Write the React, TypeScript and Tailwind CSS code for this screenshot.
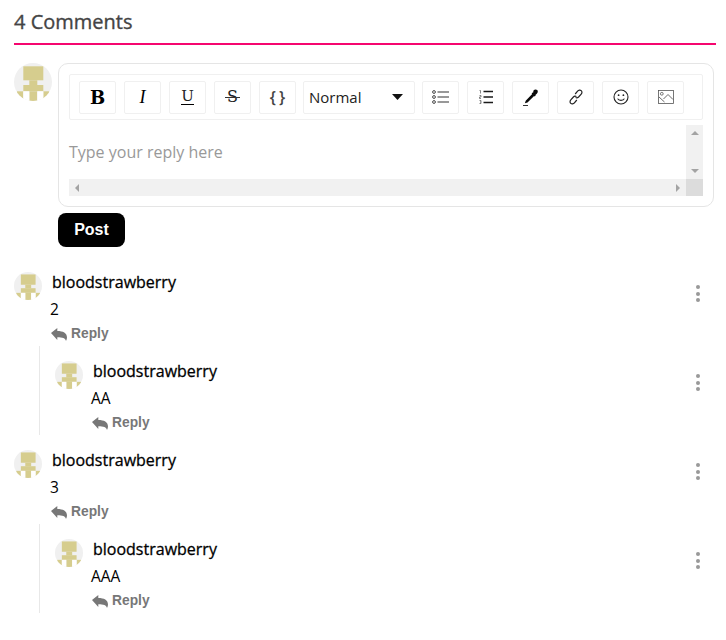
import type { ReactNode } from "react";

function Avatar({ size }: { size: number }) {
  return (
    <svg width={size} height={size} viewBox="0 0 38 38" className="shrink-0 rounded-full">
      <rect width="38" height="38" fill="#f0f0f0" />
      <g fill="#d6cd8e">
        <rect x="9.3" y="3.3" width="20" height="14" />
        <rect x="15.3" y="17.3" width="8" height="5" />
        <rect x="9.3" y="22" width="20" height="6.3" />
        <rect x="3" y="28.3" width="6.3" height="9.7" />
        <rect x="15.3" y="28.3" width="8" height="9.7" />
        <rect x="29.3" y="28.3" width="6" height="9.7" />
      </g>
      <g fill="#ffffff">
        <rect x="9.3" y="28.3" width="6" height="9.7" />
        <rect x="23.3" y="28.3" width="6" height="9.7" />
      </g>
    </svg>
  );
}

function ToolButton({ children }: { children: ReactNode }) {
  return (
    <div className="relative flex h-[33px] w-[37px] shrink-0 items-center justify-center rounded-[2px] border border-[#f0f0f0] bg-white">
      {children}
    </div>
  );
}

function Dots() {
  return (
    <div className="mt-[13px] flex flex-col gap-[2.7px]">
      <div className="h-[4px] w-[4px] rounded-full bg-[#999]" />
      <div className="h-[4px] w-[4px] rounded-full bg-[#999]" />
      <div className="h-[4px] w-[4px] rounded-full bg-[#999]" />
    </div>
  );
}

function ReplyIcon() {
  return (
    <svg width="16" height="13" viewBox="0 0 16 13">
      <path d="M0 5 6.300 0v3C12 3 16 5 16 9.500c0 1.300-.4 2.500-1 3.500-.6-2.800-3.500-3.800-8.700-3.800V12z" fill="#777" />
    </svg>
  );
}

function Comment({ text }: { text: string }) {
  return (
    <div>
      <div className="flex h-7 items-start justify-between pr-[16px]">
        <div className="flex items-start gap-[10px]">
          <Avatar size={28} />
          <span className="text-[16px] font-medium leading-[20px] text-black [-webkit-text-stroke:0.3px_#000]">bloodstrawberry</span>
        </div>
        <Dots />
      </div>
      <div className="-mt-px ml-9 text-[15.5px] leading-[20px] text-black">{text}</div>
      <div
        className="mt-[5px] ml-[37px] flex h-[20px] items-center gap-[4px] text-[13.8px] font-bold text-[#777]"
        style={{ fontFamily: '"Liberation Sans", Arial, sans-serif' }}
      >
        <ReplyIcon />
        <span>Reply</span>
      </div>
    </div>
  );
}

function Thread({ a, b }: { a: string; b: string }) {
  return (
    <div className="pb-[15px]">
      <div className="h-[74px]">
        <Comment text={a} />
      </div>
      <div className="ml-[25px] h-[89px] border-l border-[#e8e8e8] pl-[15px] pt-[15px]">
        <Comment text={b} />
      </div>
    </div>
  );
}

export default function App() {
  return (
    <div className="min-h-[640px] w-[726px] bg-white pl-[14px] pr-[10px]" style={{ fontFamily: '"Open Sans", sans-serif' }}>
      <div className="flex h-[45px] items-center border-b-2 border-[#f5066f] text-[20px] font-medium text-[#444] [-webkit-text-stroke:0.35px_#444]">
        4 Comments
      </div>
      <div className="mt-[18px] flex gap-[6px]">
        <Avatar size={38} />
        <div className="flex w-[656px] flex-col">
          <div className="h-[144px] rounded-[10px] border border-[#e5e5e5] px-[10px] pt-[10px]">
            <div className="flex h-[46px] items-center gap-2 rounded-[2px] border border-[#f0f0f0] pl-[9px]">
              <ToolButton>
                <span className="text-[18px] font-bold text-black" style={{ fontFamily: '"DejaVu Serif", serif' }}>B</span>
              </ToolButton>
              <ToolButton>
                <span className="text-[18px] italic text-black" style={{ fontFamily: '"Liberation Serif", serif' }}>I</span>
              </ToolButton>
              <ToolButton>
                <span className="border-b border-black text-[15px] leading-[15px] text-[#222]" style={{ fontFamily: '"DejaVu Serif", serif' }}>U</span>
              </ToolButton>
              <ToolButton>
                <span className="text-[16px] text-[#222]" style={{ fontFamily: '"DejaVu Serif", serif' }}>S</span>
                <div className="absolute left-[10px] top-[15px] h-px w-[15px] bg-[#333]" />
              </ToolButton>
              <ToolButton>
                <span className="pl-[3px] text-[16px] font-semibold tracking-[3px] text-[#444]">{"{}"}</span>
              </ToolButton>
              <div className="-ml-px flex h-[33px] w-[112px] shrink-0 items-center justify-between rounded-[2px] border border-[#f0f0f0] pl-[5px] pr-[11px] text-[15px] text-[#222]">
                <span>Normal</span>
                <svg width="11" height="6" viewBox="0 0 11 6"><path d="M0 0h11L5.500 6z" fill="#111" /></svg>
              </div>
              <div className="-ml-px">
                <ToolButton>
                  <svg width="17" height="14" viewBox="0 0 17 14" fill="none" stroke="#333">
                    <circle cx="2" cy="2" r="1.4" strokeWidth="0.9" />
                    <circle cx="2" cy="7" r="1.4" strokeWidth="0.9" />
                    <circle cx="2" cy="12" r="1.4" strokeWidth="0.9" />
                    <path d="M5.500 2H17M5.500 7H17M5.500 12H17" strokeWidth="1.2" />
                  </svg>
                </ToolButton>
              </div>
              <ToolButton>
                <svg width="14" height="14" viewBox="0 0 14 14" fill="none">
                  <path d="M0.500 0.500h1v3M0.500 5.500h1.500v1.500h-1.500v1.500H2M0.500 10.500H2v3H0.500M1 12h1" stroke="#555" strokeWidth="0.7" />
                  <path d="M4.500 1.500H14M4.500 7H14M4.500 12.500H14" stroke="#1a1a1a" strokeWidth="1.6" />
                </svg>
              </ToolButton>
              <ToolButton>
                <svg width="16" height="17" viewBox="0 0 16 17">
                  <path d="M10.500 1.500c1-1.200 2.800-1.300 3.700-.4s.8 2.500-.4 3.600l-1.400 1.300.3.5-1 1-.6-.5-6.600 6.500-2.600.7.8-2.500L9.200 5l-.6-.6 1-1 .5.4z" fill="#0a0a0a" />
                  <path d="M0 16.500h5" stroke="#333" strokeWidth="1" />
                </svg>
              </ToolButton>
              <ToolButton>
                <svg width="16" height="16" viewBox="0 0 16 16" fill="none" stroke="#222" strokeWidth="1.2">
                  <path d="M7.200 5 9.600 2.100c1-1.200 2.600-1.400 3.600-.5s1 2.400 0 3.500L10.600 8c-1 1-2.200 1.100-3 .3" />
                  <path d="M8.800 11 6.400 13.900c-1 1.200-2.600 1.400-3.600.5s-1-2.400 0-3.500L5.400 8c1-1 2.200-1.100 3-.3" />
                </svg>
              </ToolButton>
              <ToolButton>
                <svg width="16" height="16" viewBox="0 0 16 16" fill="none" stroke="#222" strokeWidth="1.100">
                  <circle cx="8" cy="8" r="7" />
                  <circle cx="5.600" cy="6.200" r="0.9" fill="#222" stroke="none" />
                  <circle cx="10.400" cy="6.200" r="0.9" fill="#222" stroke="none" />
                  <path d="M4.600 9.600c1 2.400 5.800 2.400 6.800 0" />
                </svg>
              </ToolButton>
              <ToolButton>
                <svg width="16" height="14" viewBox="0 0 16 14" fill="none" stroke="#555" strokeWidth="0.8">
                  <rect x="0.500" y="0.500" width="15" height="13" />
                  <circle cx="3.800" cy="3.800" r="1.400" />
                  <path d="M1 7l5.500 5M5.500 9 10 4.500l5 5" stroke="#444" />
                </svg>
              </ToolButton>
            </div>
            <div className="mt-[5px] flex h-[71px] flex-col">
              <div className="flex min-h-0 flex-1">
                <div className="flex-1 pt-[16px] text-[16px] leading-[22px] text-[#999]">Type your reply here</div>
                <div className="flex w-[17px] flex-col items-center justify-between bg-[#f1f1f1] py-[6px]">
                  <svg width="8" height="4" viewBox="0 0 8 4"><path d="M0 4h8L4 0z" fill="#a3a3a3" /></svg>
                  <svg width="8" height="4" viewBox="0 0 8 4"><path d="M0 0h8L4 4z" fill="#a3a3a3" /></svg>
                </div>
              </div>
              <div className="flex h-[17px]">
                <div className="flex flex-1 items-center justify-between bg-[#f1f1f1] px-[6px]">
                  <svg width="4" height="8" viewBox="0 0 4 8"><path d="M4 0v8L0 4z" fill="#a3a3a3" /></svg>
                  <svg width="4" height="8" viewBox="0 0 4 8"><path d="M0 0v8l4-4z" fill="#a3a3a3" /></svg>
                </div>
                <div className="w-[17px] bg-[#dcdcdc]" />
              </div>
            </div>
          </div>
          <div
            className="mt-[6px] flex h-[34px] w-[67px] items-center justify-center rounded-[8px] bg-black pb-px text-[16px] font-bold text-white"
            style={{ fontFamily: '"Liberation Sans", Arial, sans-serif' }}
          >
            Post
          </div>
        </div>
      </div>
      <div className="mt-[25px]">
        <Thread a="2" b="AA" />
        <Thread a="3" b="AAA" />
      </div>
    </div>
  );
}
